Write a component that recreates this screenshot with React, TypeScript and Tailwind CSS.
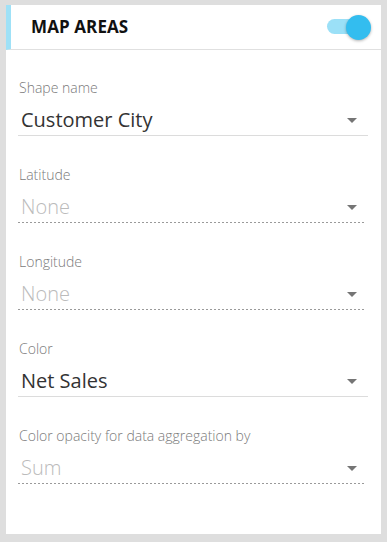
import React from "react";

type Field = {
  label: string;
  value: string;
  empty?: boolean;
};

const fields: Field[] = [
  { label: "Shape name", value: "Customer City" },
  { label: "Latitude", value: "None", empty: true },
  { label: "Longitude", value: "None", empty: true },
  { label: "Color", value: "Net Sales" },
  { label: "Color opacity for data aggregation by", value: "Sum", empty: true },
];

const Caret: React.FC = () => (
  <svg width="10" height="5" viewBox="0 0 10 5" className="shrink-0">
    <path d="M0 0h10L5 5z" fill="#757575" />
  </svg>
);

const SelectField: React.FC<{ field: Field }> = ({ field }) => {
  return (
    <div className="mb-[30px]">
      <div className="pl-[1px] text-[14px] font-light leading-[18px] text-[#7a7a7a]">
        {field.label}
      </div>
      {/* value + caret */}
      <div className="mt-[9px] flex items-center justify-between pb-[1px] pl-[3px] pr-[11px]">
        <span
          className={
            "text-[20px] leading-[28px] " +
            (field.empty ? "font-light text-[#bbb]" : "text-[#333]")
          }
        >
          {field.value}
        </span>
        <Caret />
      </div>
      {field.empty ? (
        <div className="mr-[3px] h-px bg-[linear-gradient(to_right,#9a9a9a_50%,transparent_50%)] bg-[length:4px_1px]" />
      ) : (
        <div className="h-px bg-[#dcdcdc]" />
      )}
    </div>
  );
};

const App: React.FC = () => {
  return (
    <div className="h-[542px] w-[387px] bg-[#dedede] px-[6px] pt-[5px] font-['Open_Sans',sans-serif]">
      <div className="h-[529px] bg-white">
        {/* Header */}
        <div className="flex h-[45px] items-center justify-between border-b border-l-[5px] border-b-[#e0e0e0] border-l-[#9fe1f7] pl-[20px] pr-[10px]">
          <h3 className="text-[17px] font-bold tracking-[0.1px] text-[#111]">
            MAP AREAS
          </h3>
          {/* Toggle */}
          <div className="relative h-[25px] w-[44px]">
            <div className="absolute left-0 top-[4px] h-[15px] w-[34px] rounded-full bg-[#9be0f7]" />
            <div className="absolute right-0 top-0 h-[25px] w-[25px] rounded-full bg-[#33bdef] shadow-[0_1px_3px_rgba(0,0,0,0.3)]" />
          </div>
        </div>

        {/* Fields */}
        <div className="pl-[12px] pr-[13px] pt-[29px]">
          {fields.map((f) => (
            <SelectField key={f.label} field={f} />
          ))}
        </div>
      </div>
    </div>
  );
};

export default App;
